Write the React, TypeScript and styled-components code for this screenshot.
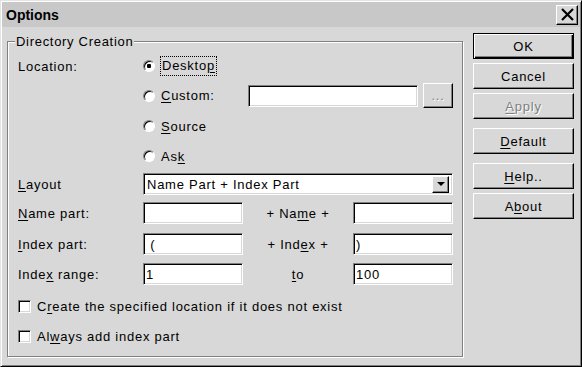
import React from "react";
import styled, { createGlobalStyle } from "styled-components";

const GlobalStyle = createGlobalStyle`
  html, body {
    margin: 0;
    padding: 0;
    background: #d8d8d8;
  }
  body {
    font-family: "Liberation Sans", Arial, sans-serif;
    font-size: 13px;
    letter-spacing: 0.75px;
    color: #000;
  }
`;

const Window = styled.div`
  width: 582px;
  height: 367px;
  box-sizing: border-box;
  border: 1px solid;
  border-color: #e4e4e4 #000 #000 #e4e4e4;
  box-shadow: inset 1px 1px 0 #fff, inset -1px -1px 0 #808080;
  padding: 1px;
  background: #d8d8d8;
  display: flex;
  flex-direction: column;
`;

const TitleBar = styled.div`
  height: 25px;
  flex: none;
  background: #c8c8c8;
  display: flex;
  align-items: center;
  justify-content: space-between;
  padding: 0 2px 0 4px;
`;

const Title = styled.div`
  font-weight: bold;
  font-size: 14px;
  letter-spacing: 0;
`;

const CloseButton = styled.div`
  width: 22px;
  height: 20px;
  box-sizing: border-box;
  border: 1px solid;
  border-color: #fff #000 #000 #fff;
  box-shadow: inset -1px -1px 0 #808080;
  background: #d8d8d8;
  display: flex;
  align-items: center;
  justify-content: center;
`;

const Body = styled.div`
  flex: 1;
  display: flex;
  align-items: stretch;
  padding: 6px 5px 8px 5px;
`;

const GroupBox = styled.div`
  position: relative;
  width: 456px;
  box-sizing: border-box;
  margin-top: 8px;
  border: 1px solid #808080;
  box-shadow: inset 1px 1px 0 #fff, 1px 1px 0 #fff;
  padding: 13px 0 0 10px;
  display: flex;
  flex-direction: column;
`;

const GroupTitle = styled.span`
  position: absolute;
  top: -8px;
  left: 7px;
  padding: 0 1px;
  line-height: 15px;
  background: #d8d8d8;
  letter-spacing: 0.7px;
`;

const Row = styled.div<{ $mt?: number; $h?: number }>`
  display: grid;
  grid-template-columns: 125px 100px 110px 100px;
  align-items: center;
  height: ${(p) => p.$h ?? 22}px;
  margin-top: ${(p) => p.$mt ?? 0}px;
`;

const FieldLabel = styled.div``;

const MidLabel = styled.div`
  text-align: center;
`;

const Key = styled.span`
  text-decoration: underline;
  text-underline-offset: 2px;
`;

const Wide = styled.div`
  grid-column: 2 / span 3;
  display: flex;
  align-items: center;
`;

const RadioItem = styled.div<{ $w?: number }>`
  display: flex;
  align-items: center;
  gap: 6px;
  width: ${(p) => (p.$w ? `${p.$w}px` : "auto")};
  flex: none;
`;

const RadioDot = styled.span<{ $checked?: boolean }>`
  position: relative;
  width: 12px;
  height: 12px;
  box-sizing: border-box;
  border-radius: 50%;
  border: 1px solid;
  border-color: #808080 #fff #fff #808080;
  box-shadow: inset 1px 1px 0 #000;
  background: #fff;
  flex: none;
  &::after {
    content: "";
    display: ${(p) => (p.$checked ? "block" : "none")};
    position: absolute;
    left: 3px;
    top: 3px;
    width: 4px;
    height: 4px;
    border-radius: 1px;
    background: #000;
  }
`;

const Focus = styled.span`
  padding: 1px 1px 2px;
  outline: 1px dotted #000;
`;

const TextBox = styled.input<{ $w?: number }>`
  width: ${(p) => (p.$w ? `${p.$w}px` : "100%")};
  height: 22px;
  box-sizing: border-box;
  margin: 0;
  padding: 0 2px;
  border: 1px solid;
  border-color: #808080 #fff #fff #808080;
  box-shadow: inset 1px 1px 0 #000, inset -1px -1px 0 #d8d8d8;
  background: #fff;
  font: inherit;
  letter-spacing: inherit;
  color: #000;
  outline: none;
  flex: none;
`;

const Combo = styled.div`
  grid-column: 2 / span 3;
  height: 22px;
  box-sizing: border-box;
  border: 1px solid;
  border-color: #808080 #fff #fff #808080;
  box-shadow: inset 1px 1px 0 #000, inset -1px -1px 0 #d8d8d8;
  background: #fff;
  display: flex;
  align-items: center;
  justify-content: space-between;
  padding: 0 3px 0 3px;
`;

const ComboArrow = styled.span`
  width: 17px;
  height: 17px;
  box-sizing: border-box;
  border: 1px solid;
  border-color: #fff #000 #000 #fff;
  box-shadow: inset -1px -1px 0 #808080;
  background: #d8d8d8;
  display: flex;
  align-items: center;
  justify-content: center;
  &::after {
    content: "";
    width: 0;
    height: 0;
    border-left: 4px solid transparent;
    border-right: 4px solid transparent;
    border-top: 4px solid #000;
  }
`;

const Button = styled.div<{ $mt?: number; $default?: boolean; $disabled?: boolean; $w?: number; $h?: number }>`
  width: ${(p) => (p.$w ? `${p.$w}px` : "100%")};
  height: ${(p) => p.$h ?? 26}px;
  margin-top: ${(p) => p.$mt ?? 0}px;
  box-sizing: border-box;
  border: 1px solid;
  border-color: ${(p) => (p.$default ? "#000" : "#fff #000 #000 #fff")};
  box-shadow: ${(p) =>
    p.$default
      ? "inset 1px 1px 0 #fff, inset -1px -1px 0 #000, inset -2px -2px 0 #808080"
      : "inset -1px -1px 0 #808080"};
  background: #d8d8d8;
  display: flex;
  align-items: center;
  justify-content: center;
  color: ${(p) => (p.$disabled ? "#808080" : "#000")};
  text-shadow: ${(p) => (p.$disabled ? "1px 1px 0 #fff" : "none")};
  flex: none;
`;

const ButtonColumn = styled.div`
  width: 101px;
  margin-left: 10px;
  display: flex;
  flex-direction: column;
  align-self: flex-start;
`;

const CheckRow = styled.div<{ $mt?: number }>`
  display: flex;
  align-items: center;
  gap: 6px;
  height: 22px;
  margin-top: ${(p) => p.$mt ?? 0}px;
`;

const CheckBox = styled.span`
  width: 13px;
  height: 13px;
  box-sizing: border-box;
  border: 1px solid;
  border-color: #808080 #fff #fff #808080;
  box-shadow: inset 1px 1px 0 #000, inset -1px -1px 0 #d8d8d8;
  background: #fff;
  flex: none;
`;

const App = () => {
  return (
    <>
      <GlobalStyle />
      <Window>
        <TitleBar>
          <Title>Options</Title>
          <CloseButton>
            <svg width="13" height="13" viewBox="0 0 13 13">
              <path d="M1 1 L12 12 M12 1 L1 12" stroke="#000" strokeWidth="2.2" />
            </svg>
          </CloseButton>
        </TitleBar>
        <Body>
          <GroupBox>
            <GroupTitle>Directory Creation</GroupTitle>

            <Row>
              <FieldLabel>Location:</FieldLabel>
              <Wide>
                <RadioItem>
                  <RadioDot $checked />
                  <Focus>
                    Deskto<Key>p</Key>
                  </Focus>
                </RadioItem>
              </Wide>
            </Row>

            <Row $mt={6} $h={25}>
              <span />
              <Wide>
                <RadioItem $w={105}>
                  <RadioDot />
                  <span>
                    <Key>C</Key>ustom:
                  </span>
                </RadioItem>
                <TextBox $w={170} defaultValue="" readOnly />
                <Button $w={30} $h={25} $disabled style={{ marginLeft: 5 }}>
                  ...
                </Button>
              </Wide>
            </Row>

            <Row $mt={7}>
              <span />
              <Wide>
                <RadioItem>
                  <RadioDot />
                  <span>
                    <Key>S</Key>ource
                  </span>
                </RadioItem>
              </Wide>
            </Row>

            <Row $mt={8}>
              <span />
              <Wide>
                <RadioItem>
                  <RadioDot />
                  <span>
                    As<Key>k</Key>
                  </span>
                </RadioItem>
              </Wide>
            </Row>

            <Row $mt={6}>
              <FieldLabel>
                <Key>L</Key>ayout
              </FieldLabel>
              <Combo>
                <span>Name Part + Index Part</span>
                <ComboArrow />
              </Combo>
            </Row>

            <Row $mt={7}>
              <FieldLabel>
                <Key>N</Key>ame part:
              </FieldLabel>
              <TextBox defaultValue="" readOnly />
              <MidLabel>
                + Na<Key>m</Key>e +
              </MidLabel>
              <TextBox defaultValue="" readOnly />
            </Row>

            <Row $mt={9}>
              <FieldLabel>
                <Key>I</Key>ndex part:
              </FieldLabel>
              <TextBox defaultValue=" (" readOnly />
              <MidLabel>
                + Ind<Key>e</Key>x +
              </MidLabel>
              <TextBox defaultValue=")" readOnly />
            </Row>

            <Row $mt={8}>
              <FieldLabel>
                Inde<Key>x</Key> range:
              </FieldLabel>
              <TextBox defaultValue="1" readOnly />
              <MidLabel>
                <Key>t</Key>o
              </MidLabel>
              <TextBox defaultValue="100" readOnly />
            </Row>

            <CheckRow $mt={10}>
              <CheckBox />
              <span>
                C<Key>r</Key>eate the specified location if it does not exist
              </span>
            </CheckRow>

            <CheckRow $mt={8}>
              <CheckBox />
              <span>
                Al<Key>w</Key>ays add index part
              </span>
            </CheckRow>
          </GroupBox>

          <ButtonColumn>
            <Button $default>OK</Button>
            <Button $mt={4}>Cancel</Button>
            <Button $mt={4} $disabled>
              <span>
                <Key>A</Key>pply
              </span>
            </Button>
            <Button $mt={9}>
              <span>
                <Key>D</Key>efault
              </span>
            </Button>
            <Button $mt={9}>
              <span>
                <Key>H</Key>elp..
              </span>
            </Button>
            <Button $mt={4}>
              <span>
                A<Key>b</Key>out
              </span>
            </Button>
          </ButtonColumn>
        </Body>
      </Window>
    </>
  );
};

export default App;
